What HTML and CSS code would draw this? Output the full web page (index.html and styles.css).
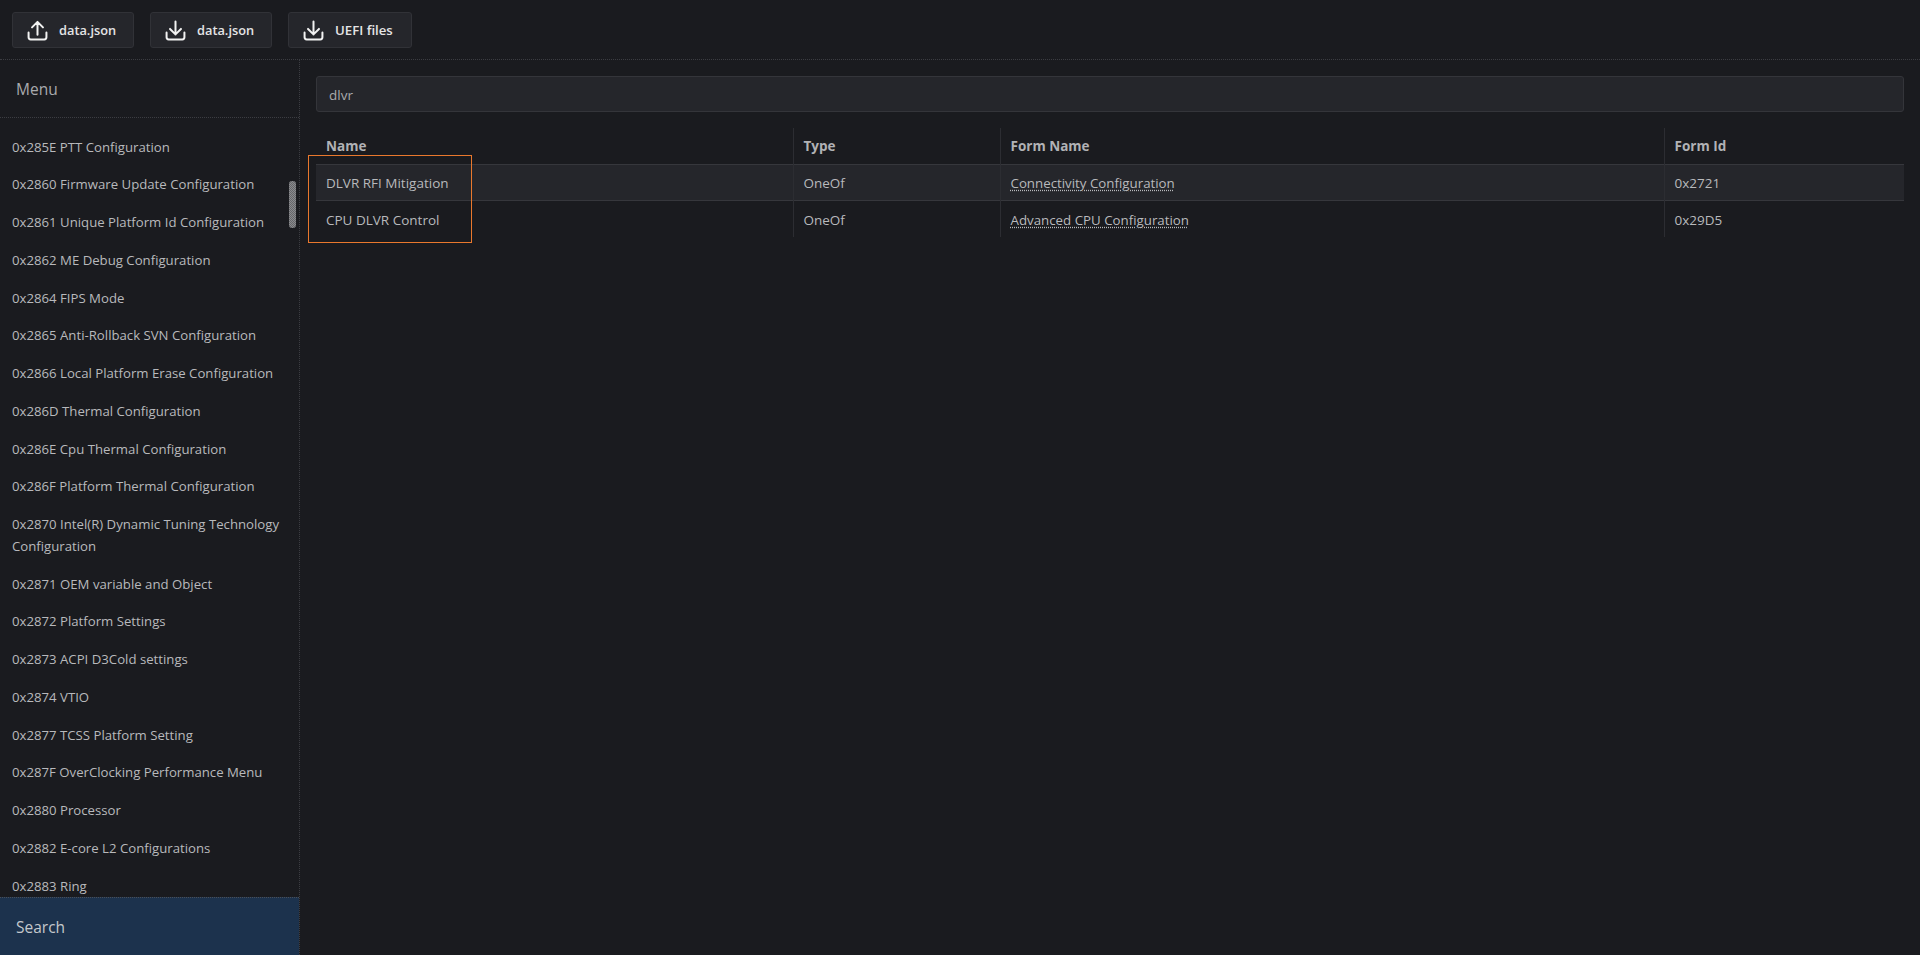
FILE: index.html
```html
<!DOCTYPE html>
<html lang="en">
<head>
<meta charset="utf-8">
<title>Setup</title>
<link rel="stylesheet" href="styles.css">
</head>
<body>
<header class="topbar">
  <button class="btn"><svg class="ico" viewBox="0 0 20 20"><path d="M1.5 12v4.5a2 2 0 0 0 2 2h13a2 2 0 0 0 2-2V12M10 14V1.8M4.8 7 10 1.8 15.2 7"/></svg><span>data.json</span></button>
  <button class="btn"><svg class="ico" viewBox="0 0 20 20"><path d="M1.5 12v4.5a2 2 0 0 0 2 2h13a2 2 0 0 0 2-2V12M10 1.5v12.2M4.8 8.5 10 13.7l5.2-5.2"/></svg><span>data.json</span></button>
  <button class="btn wide"><svg class="ico" viewBox="0 0 20 20"><path d="M1.5 12v4.5a2 2 0 0 0 2 2h13a2 2 0 0 0 2-2V12M10 1.5v12.2M4.8 8.5 10 13.7l5.2-5.2"/></svg><span>UEFI files</span></button>
</header>
<div class="layout">
  <aside class="sidebar">
    <div class="menu-head">Menu</div>
    <nav class="menu">
      <a>0x285E PTT Configuration</a>
      <a>0x2860 Firmware Update Configuration</a>
      <a>0x2861 Unique Platform Id Configuration</a>
      <a>0x2862 ME Debug Configuration</a>
      <a>0x2864 FIPS Mode</a>
      <a>0x2865 Anti-Rollback SVN Configuration</a>
      <a>0x2866 Local Platform Erase Configuration</a>
      <a>0x286D Thermal Configuration</a>
      <a>0x286E Cpu Thermal Configuration</a>
      <a>0x286F Platform Thermal Configuration</a>
      <a>0x2870 Intel(R) Dynamic Tuning Technology Configuration</a>
      <a>0x2871 OEM variable and Object</a>
      <a>0x2872 Platform Settings</a>
      <a>0x2873 ACPI D3Cold settings</a>
      <a>0x2874 VTIO</a>
      <a>0x2877 TCSS Platform Setting</a>
      <a>0x287F OverClocking Performance Menu</a>
      <a>0x2880 Processor</a>
      <a>0x2882 E-core L2 Configurations</a>
      <a>0x2883 Ring</a>
    </nav>
    <div class="thumb"></div>
    <div class="search-tab">Search</div>
  </aside>
  <main class="content">
    <div class="search-box">dlvr</div>
    <table class="results">
      <thead>
        <tr><th class="c1">Name</th><th class="c2">Type</th><th class="c3">Form Name</th><th>Form Id</th></tr>
      </thead>
      <tbody>
        <tr class="odd"><td>DLVR RFI Mitigation</td><td>OneOf</td><td><a class="link">Connectivity Configuration</a></td><td>0x2721</td></tr>
        <tr class="even"><td>CPU DLVR Control</td><td>OneOf</td><td><a class="link">Advanced CPU Configuration</a></td><td>0x29D5</td></tr>
      </tbody>
    </table>
    <div class="highlight"></div>
  </main>
</div>
</body>
</html>
```
FILE: styles.css
```css
* { box-sizing: border-box; }
html, body { height: 100%; }
body {
  margin: 0;
  height: 955px;
  overflow: hidden;
  display: flex;
  flex-direction: column;
  background: #1a1b1f;
  color: #b8b9bc;
  font-family: "Open Sans", "Noto Sans", sans-serif;
  font-size: 13.5px;
}
.topbar {
  flex: none;
  height: 60px;
  padding: 12px;
  display: flex;
  gap: 16px;
  border-bottom: 1px dotted #3c3d42;
}
.btn {
  width: 122px;
  height: 36px;
  padding: 0 0 0 14px;
  display: flex;
  align-items: center;
  gap: 11px;
  background: #25262b;
  border: 1px solid #313237;
  border-radius: 3px;
  color: #e4e4e5;
  font: 600 12.8px "Open Sans", "Noto Sans", sans-serif;
}
.wide { width: 124px; font-size: 13.2px; }
.ico {
  width: 21px;
  height: 21px;
  fill: none;
  stroke: #f2f2f2;
  stroke-width: 1.9;
  stroke-linecap: round;
  stroke-linejoin: round;
}
.layout { flex: 1; min-height: 0; display: flex; }
.sidebar {
  position: relative;
  flex: none;
  width: 300px;
  display: flex;
  flex-direction: column;
  border-right: 1px dotted #3c3d42;
}
.menu-head {
  flex: none;
  height: 58px;
  padding: 1px 16px 0;
  display: flex;
  align-items: center;
  font-size: 15.5px;
  color: #a9aaad;
  border-bottom: 1px dotted #3c3d42;
}
.menu {
  flex: 1;
  min-height: 0;
  overflow: hidden;
  padding: 10.5px 12px 0;
  font-size: 13.2px;
}
.menu a {
  display: block;
  padding: 8px 0;
  line-height: 21.75px;
}
.thumb {
  position: absolute;
  left: 289px;
  top: 121px;
  width: 7px;
  height: 47px;
  border-radius: 3px;
  background-color: #77787b;
  background-image: repeating-conic-gradient(#8a8b8e 0 25%, #66676a 0 50%);
  background-size: 2px 2px;
}
.search-tab {
  flex: none;
  height: 58px;
  padding: 0 16px;
  display: flex;
  align-items: center;
  font-size: 15.5px;
  color: #c4c8cc;
  background: #1c324d;
  border-top: 1px dotted #4a4f57;
}
.content {
  position: relative;
  flex: 1;
  min-width: 0;
  padding: 16px;
}
.search-box {
  height: 36px;
  padding: 1px 12px 0;
  display: flex;
  align-items: center;
  background: #25262b;
  border: 1px solid #34353a;
  border-radius: 3px;
  color: #a9aaad;
}
.results {
  width: 100%;
  margin-top: 16px;
  border-collapse: collapse;
  table-layout: fixed;
}
.results th, .results td {
  height: 37px;
  padding: 1px 10px 0;
  text-align: left;
  font-weight: 400;
  border-left: 1px solid #2c2d32;
}
.results th:first-child, .results td:first-child { border-left: 0; }
.results th { height: 36px; font-weight: 700; color: #b1b2b5; }
.results tbody tr { border-top: 1px solid #36373c; }
.results .odd td { height: 36px; }
.results .even td { padding-top: 2px; }
.odd { background: #25262b; }
.c1 { width: 477px; }
.c2 { width: 207px; }
.c3 { width: 664px; }
.link { font-size: 13.3px; text-decoration: underline dotted; text-underline-offset: 2px; }
.highlight {
  position: absolute;
  left: 8px;
  top: 95px;
  width: 164px;
  height: 88px;
  border: 1px solid #e9782d;
}
```
